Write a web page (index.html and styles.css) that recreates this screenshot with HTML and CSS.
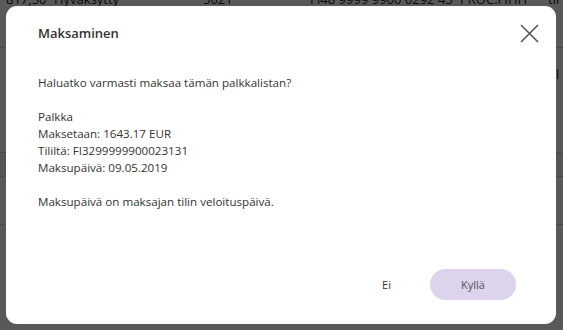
FILE: index.html
```html
<!DOCTYPE html>
<html lang="fi">
<head>
    <meta charset="UTF-8">
    <meta name="viewport" content="width=device-width, initial-scale=1.0">
    <title>Maksaminen</title>
    <link rel="stylesheet" href="styles.css">
</head>
<body>
    <!-- Payroll table behind the dialog -->
    <div class="table">
        <div class="row first">
            <span class="c-sum">817,50</span>
            <span class="c-state">Hyväksytty</span>
            <span class="c-id">5021</span>
            <span class="c-iban">FI48 9999 9900 0292 45</span>
            <span class="c-bic">PROC.FIHH</span>
            <span class="c-more">til</span>
        </div>
        <div class="row second">
            <span class="c-more">til</span>
        </div>
        <div class="row tall"></div>
        <div class="row hover"></div>
        <div class="row"></div>
    </div>

    <!-- Confirm dialog -->
    <div class="modal-overlay"></div>
    <div class="modal">
        <div class="modal-header">
            <h2 class="modal-title">Maksaminen</h2>
            <button class="modal-close" aria-label="Sulje">
                <svg width="19" height="19" viewBox="0 0 19 19">
                    <path d="M1 1 L18 18 M18 1 L1 18" stroke="#555" stroke-width="1.6" fill="none"/>
                </svg>
            </button>
        </div>
        <div class="modal-body">
            <p>Haluatko varmasti maksaa tämän palkkalistan?</p>
            <p>Palkka<br>
               Maksetaan: 1643.17 EUR<br>
               Tililtä: FI3299999900023131<br>
               Maksupäivä: 09.05.2019</p>
            <p>Maksupäivä on maksajan tilin veloituspäivä.</p>
        </div>
        <div class="modal-actions">
            <button class="btn-text">Ei</button>
            <button class="btn-primary">Kyllä</button>
        </div>
    </div>
</body>
</html>
```

FILE: styles.css
```css
body {
    margin: 0;
    font-family: "Open Sans", "Noto Sans", sans-serif;
    background-color: #fff;
    color: #333;
    height: 330px;
    overflow: hidden;
}
.table {
    font-size: 13px;
    color: #222;
}
.row {
    height: 48px;
    border-bottom: 1px solid #d0d0d0;
    position: relative;
    box-sizing: border-box;
}
.row.first {
    margin-top: -9px;
    height: 57px;
}
.row.second {
    height: 0;
    border: none;
}
.row.tall {
    height: 105px;
}
.row.hover {
    height: 24px;
    background-color: #f4f4f4;
}
.row span {
    position: absolute;
    top: 0;
    line-height: 16px;
}
.c-sum { left: 6px; }
.c-state { left: 54px; }
.c-id { left: 203px; }
.c-iban { left: 310px; }
.c-bic { left: 460px; }
.c-more { left: 548px; }
.row.second .c-more { top: 18px; }
.modal-overlay {
    position: fixed;
    top: 0;
    left: 0;
    width: 100%;
    height: 100%;
    background-color: rgba(0, 0, 0, 0.65);
}
.modal {
    position: fixed;
    top: 6px;
    left: 6px;
    width: 550px;
    height: 318px;
    box-sizing: border-box;
    background-color: #fff;
    border-radius: 11px;
    padding: 16px 17px 24px 32px;
    display: flex;
    flex-direction: column;
}
.modal-header {
    display: flex;
    justify-content: space-between;
    align-items: center;
}
.modal-title {
    margin: 0;
    font-size: 13px;
    font-weight: 600;
    color: #333;
    line-height: 18px;
}
.modal-close {
    border: none;
    background: none;
    padding: 0;
    width: 19px;
    height: 19px;
    margin-top: 2px;
    cursor: pointer;
}
.modal-body {
    margin-top: 31px;
    font-size: 11.6px;
    line-height: 17px;
    color: #333;
    flex: 1;
}
.modal-body p {
    margin: 0 0 17px;
}
.modal-actions {
    display: flex;
    justify-content: flex-end;
    align-items: center;
    gap: 39px;
    padding-right: 23px;
}
.btn-text {
    border: none;
    background: none;
    font-family: inherit;
    font-size: 11px;
    color: #333;
    padding: 0;
    cursor: pointer;
}
.btn-primary {
    border: none;
    width: 86px;
    height: 31px;
    border-radius: 16px;
    background-color: #ddd3ec;
    font-family: inherit;
    font-size: 11px;
    color: #555;
    cursor: pointer;
}
```
